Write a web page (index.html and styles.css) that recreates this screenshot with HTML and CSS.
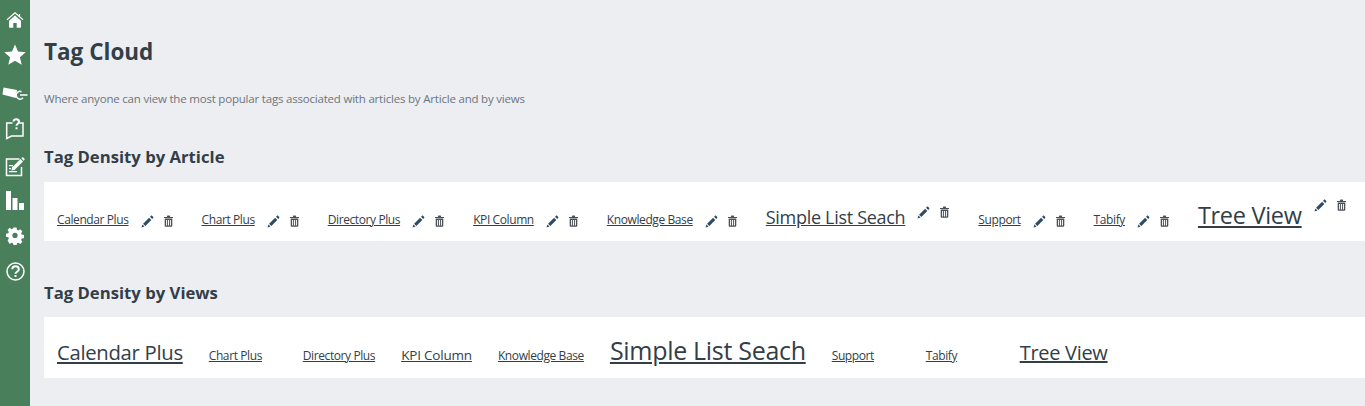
FILE: index.html
```html
<!DOCTYPE html>
<html lang="en">
<head>
    <meta charset="UTF-8">
    <meta name="viewport" content="width=device-width, initial-scale=1.0">
    <title>Tag Cloud</title>
    <link rel="stylesheet" href="styles.css">
</head>
<body>
    <svg class="defs" width="0" height="0">
        <symbol id="pencil" viewBox="0 0 13 13">
            <path class="pencil-tip" d="M0.500 12.500l0.900-3 2.100 2.100z"/>
            <path d="M2.100 8.700l6-6 2.200 2.200-6 6z"/>
            <path d="M9 1.800l0.900-0.900c0.400-0.400 0.900-0.400 1.300 0l0.900 0.900c0.400 0.400 0.400 0.900 0 1.300l-0.900 0.900z"/>
        </symbol>
        <symbol id="trash" viewBox="0 0 11 12">
            <path d="M1 2h9v1h-9zM3.800 2l0.500-1.500h2.400l0.500 1.500z"/>
            <path fill-rule="evenodd" d="M1.700 3.600h7.600v7.200c0 0.500-0.400 0.900-0.900 0.900h-5.800c-0.500 0-0.900-0.400-0.900-0.900zM3.100 5v5.400h1v-5.400zM5 5v5.400h1v-5.400zM6.900 5v5.400h1v-5.400z"/>
        </symbol>
    </svg>

    <div class="layout">
        <nav class="sidebar">
            <a class="nav-icon nav-home" href="#">
                <svg width="18" height="18" viewBox="0 0 18 18"><path d="M9 4.600l6 5.200v6.200c0 .4-.3.700-.7.700h-3.600v-4.600H7.300v4.600H3.700c-.4 0-.7-.3-.7-.7V9.800z"/><path class="line roof" d="M1 8.700L9 1.800l8 6.900M13.500 3v2.500"/></svg>
            </a>
            <a class="nav-icon nav-star" href="#">
                <svg width="22" height="22" viewBox="0 0 22 22"><path d="M11 .5l3 7.100 7.700.7-5.800 5 1.800 7.400L11 16.800l-6.700 3.900 1.800-7.400-5.800-5L8 7.600z"/></svg>
            </a>
            <a class="nav-icon nav-tag" href="#">
                <svg width="26" height="16" viewBox="0 0 26 16"><path d="M1.500 2.500L15 5l-1.200 8L.5 9.500z"/><path class="line" d="M19.500 6.700a3.800 3.800 0 1 0 1.500 6M18 10h7.500"/></svg>
            </a>
            <a class="nav-icon nav-ask" href="#">
                <svg width="20" height="22" viewBox="0 0 20 22"><path class="line" d="M7.500 5H1.700v15.500L6.500 18H18V5h-3.800"/><path class="line thick" d="M8.500 3.500c.3-3 5.500-3 5.500.3 0 2-2.500 2-2.500 4"/><path d="M10.500 9.300h2v2h-2z"/></svg>
            </a>
            <a class="nav-icon nav-edit" href="#">
                <svg width="20" height="20" viewBox="0 0 20 20"><path class="line" d="M14.500 2H1.500v16.500h15V10"/><path d="M7 10.500L15.500 2l2.500 2.500-8.500 8.500-3 .5zM16.300 1.300l.8-.8c.4-.3.8-.3 1.100 0l1.300 1.300c.3.300.3.700 0 1l-.8.900z"/><path d="M4 8h4v1.300H4zM4 11h2v1.300H4zM4 14h8v1.300H4z"/></svg>
            </a>
            <a class="nav-icon nav-bars" href="#">
                <svg width="18" height="19" viewBox="0 0 18 19"><path d="M0 0h5v19H0zM6.500 7h5v12h-5zM13 12h5v7h-5z"/></svg>
            </a>
            <a class="nav-icon nav-gear" href="#">
                <svg width="18" height="18" viewBox="0 0 18 18"><path fill-rule="evenodd" d="M7.300 0h3.400l.5 2.500 1.500.7 2.200-1.400 2.300 2.400-1.400 2.100.6 1.500 2.600.5v3.400l-2.600.5-.6 1.500 1.400 2.100-2.300 2.400-2.200-1.400-1.500.7-.5 2.500H7.300l-.5-2.500-1.500-.7-2.200 1.400L.8 14.300l1.400-2.100-.6-1.500L-1 10.200V6.800l2.600-.5.6-1.500L.8 2.700l2.300-2.400 2.200 1.400 1.500-.7zM9 5.800a2.900 2.900 0 1 0 0 5.800 2.900 2.900 0 0 0 0-5.800z" transform="translate(.9 .6) scale(.9)"/></svg>
            </a>
            <a class="nav-icon nav-help" href="#">
                <svg width="19" height="19" viewBox="0 0 19 19"><circle class="line" cx="9.500" cy="9.500" r="8.500"/><path class="line thick" d="M6.300 7.300c0-4 6.500-4 6.500 0 0 2.500-3.300 2.300-3.300 4.500"/><path d="M8.500 13h2v2h-2z"/></svg>
            </a>
        </nav>

        <main class="content">
            <h1 class="page-title">Tag Cloud</h1>
            <p class="page-desc">Where anyone can view the most popular tags associated with articles by Article and by views</p>

            <h2 class="section-title">Tag Density by Article</h2>
            <div class="tag-panel tag-panel-article">
                <div class="tag-item"><a class="tag size-12" href="#">Calendar Plus</a><svg class="icon-pencil"><use href="#pencil"/></svg><svg class="icon-trash"><use href="#trash"/></svg></div>
                <div class="tag-item"><a class="tag size-12" href="#">Chart Plus</a><svg class="icon-pencil"><use href="#pencil"/></svg><svg class="icon-trash"><use href="#trash"/></svg></div>
                <div class="tag-item"><a class="tag size-12" href="#">Directory Plus</a><svg class="icon-pencil"><use href="#pencil"/></svg><svg class="icon-trash"><use href="#trash"/></svg></div>
                <div class="tag-item"><a class="tag size-12" href="#">KPI Column</a><svg class="icon-pencil"><use href="#pencil"/></svg><svg class="icon-trash"><use href="#trash"/></svg></div>
                <div class="tag-item"><a class="tag size-12" href="#">Knowledge Base</a><svg class="icon-pencil"><use href="#pencil"/></svg><svg class="icon-trash"><use href="#trash"/></svg></div>
                <div class="tag-item"><a class="tag size-18" href="#">Simple List Seach</a><svg class="icon-pencil"><use href="#pencil"/></svg><svg class="icon-trash"><use href="#trash"/></svg></div>
                <div class="tag-item"><a class="tag size-12" href="#">Support</a><svg class="icon-pencil"><use href="#pencil"/></svg><svg class="icon-trash"><use href="#trash"/></svg></div>
                <div class="tag-item"><a class="tag size-12" href="#">Tabify</a><svg class="icon-pencil"><use href="#pencil"/></svg><svg class="icon-trash"><use href="#trash"/></svg></div>
                <div class="tag-item"><a class="tag size-24" href="#">Tree View</a><svg class="icon-pencil"><use href="#pencil"/></svg><svg class="icon-trash"><use href="#trash"/></svg></div>
            </div>

            <h2 class="section-title section-views">Tag Density by Views</h2>
            <div class="tag-panel tag-panel-views">
                <div class="tag-item"><a class="tag size-20" href="#">Calendar Plus</a></div>
                <div class="tag-item"><a class="tag size-12" href="#">Chart Plus</a></div>
                <div class="tag-item"><a class="tag size-12" href="#">Directory Plus</a></div>
                <div class="tag-item"><a class="tag size-14" href="#">KPI Column</a></div>
                <div class="tag-item"><a class="tag size-12" href="#">Knowledge Base</a></div>
                <div class="tag-item"><a class="tag size-26" href="#">Simple List Seach</a></div>
                <div class="tag-item"><a class="tag size-12" href="#">Support</a></div>
                <div class="tag-item"><a class="tag size-12" href="#">Tabify</a></div>
                <div class="tag-item"><a class="tag size-19" href="#">Tree View</a></div>
            </div>
        </main>
    </div>
</body>
</html>
```

FILE: styles.css
```css
html, body {
    margin: 0;
    padding: 0;
}
body {
    background-color: #edeef2;
    color: #323e48;
    font-family: "Open Sans", "Noto Sans", Arial, sans-serif;
    height: 406px;
    overflow: hidden;
}
.defs {
    position: absolute;
}
.layout {
    display: flex;
    height: 406px;
}

/* left nav */
.sidebar {
    width: 30px;
    flex-shrink: 0;
    background-color: #4a7f5c;
    display: flex;
    flex-direction: column;
    align-items: center;
    padding-top: 10px;
    box-sizing: border-box;
    overflow: hidden;
}
.nav-icon {
    display: flex;
    justify-content: center;
    align-items: center;
    width: 30px;
    height: 20px;
}
.nav-icon svg {
    fill: #fff;
    flex-shrink: 0;
}
.nav-icon .line {
    fill: none;
    stroke: #fff;
    stroke-width: 1.5;
}
.nav-icon .thick {
    stroke-width: 2;
}
.nav-icon .roof {
    stroke-width: 1.2;
}
.nav-star { margin-top: 15px; }
.nav-star svg { margin-right: 1px; }
.nav-tag { margin-top: 18px; }
.nav-ask { margin-top: 16px; }
.nav-edit { margin-top: 18px; }
.nav-bars { margin-top: 13px; }
.nav-gear { margin-top: 16px; }
.nav-help { margin-top: 15px; }

/* main */
.content {
    flex: 1;
    min-width: 0;
    padding: 37px 0 0 14px;
}
.page-title {
    margin: 0;
    font-size: 22.500px;
    line-height: 30px;
    font-weight: 700;
}
.page-desc {
    margin: 23px 0 0;
    font-size: 11.500px;
    line-height: 17px;
    color: #6c757d;
    letter-spacing: -0.2px;
}
.section-title {
    margin: 38px 0 0;
    font-size: 16.700px;
    line-height: 24px;
    font-weight: 700;
}
.section-views {
    margin-top: 40px;
}
.tag-panel {
    background-color: #fff;
    padding-left: 13px;
    display: flex;
    align-items: baseline;
    white-space: nowrap;
    box-sizing: border-box;
}
.tag-panel-article {
    margin-top: 13px;
    height: 59px;
    padding-top: 14px;
    gap: 28px;
}
.tag-panel-views {
    margin-top: 12px;
    height: 61px;
    padding-top: 17px;
    gap: 26px;
}
.tag-item {
    display: flex;
    align-items: flex-start;
    min-width: 68px;
}
.tag {
    color: #323e48;
    text-decoration: underline;
    letter-spacing: -0.3px;
}
.size-12 { font-size: 12px; line-height: 16px; letter-spacing: -0.4px; }
.size-14 { font-size: 13.500px; line-height: 18px; letter-spacing: -0.2px; }
.size-18 { font-size: 18px; line-height: 28px; }
.size-19 { font-size: 20px; line-height: 27px; }
.size-20 { font-size: 20.300px; line-height: 27px; }
.size-24 { font-size: 23.500px; line-height: 39px; }
.size-26 { font-size: 25px; line-height: 33px; }

.icon-pencil {
    width: 13px;
    height: 13px;
    margin: 3px 0 0 12px;
    fill: #2f4a63;
}
.icon-pencil .pencil-tip {
    fill: #7a8a96;
}
.icon-trash {
    width: 11px;
    height: 12px;
    margin: 3px 0 0 9px;
    fill: #4a5056;
}
```
